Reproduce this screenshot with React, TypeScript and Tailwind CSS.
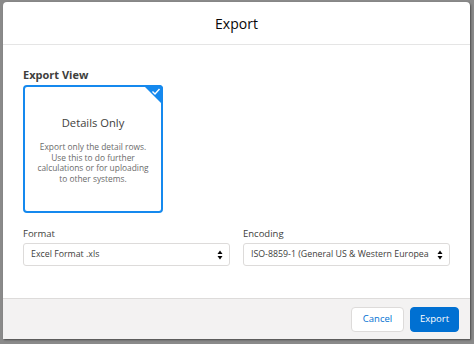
import React from "react";

const font = { fontFamily: "'Open Sans', 'Noto Sans', sans-serif" };

function SelectArrows() {
    return (
        <svg width="6" height="10" viewBox="0 0 6 10" className="shrink-0">
            <path d="M3 0.5 L5.5 4 L0.5 4 Z" fill="#080707" />
            <path d="M3 9.5 L5.5 6 L0.5 6 Z" fill="#080707" />
        </svg>
    );
}

function Field({ label, value }: { label: string; value: string }) {
    return (
        <div className="flex flex-col min-w-0">
            <span className="text-[9.5px] leading-[12px] text-[#3e3e3c] mb-[3px]">
                {label}
            </span>
            <div className="h-[23px] flex items-center gap-2 pl-[7px] pr-[6px] bg-white border border-[#dddbda] rounded-[3px]">
                <span className="flex-1 min-w-0 whitespace-nowrap overflow-hidden text-[8.8px] text-[#3e3e3c]">
                    {value}
                </span>
                <SelectArrows />
            </div>
        </div>
    );
}

export default function App() {
    return (
        <div
            className="w-[474px] h-[344px] bg-[#8a8a8a] pt-[2px] pl-[3px]"
            style={font}
        >
            <div className="w-[467px] h-[337px] bg-white rounded-t-[4px] flex flex-col overflow-hidden shadow-[1px_1px_2px_rgba(0,0,0,0.45)]">
                {/* header */}
                <div className="h-[43px] shrink-0 flex items-center justify-center border-b border-[#e5e5e5]">
                    <h2 className="text-[14px] text-[#080707]">Export</h2>
                </div>

                {/* body */}
                <div className="flex-1 px-5 pt-[23px]">
                    <div className="text-[11px] leading-[14px] font-bold text-[#3e3e3c] mb-[3px]">
                        Export View
                    </div>
                    <div className="relative w-[140px] h-[128px] border-2 border-[#1589ee] rounded-[4px] flex flex-col items-center pt-[28px]">
                        <svg
                            width="20"
                            height="20"
                            viewBox="0 0 20 20"
                            className="absolute -top-[2px] -right-[2px]"
                        >
                            <path d="M0 0 H16 A4 4 0 0 1 20 4 V20 Z" fill="#1589ee" />
                            <path
                                d="M9.5 6.5 L12 9 L16.5 4"
                                fill="none"
                                stroke="white"
                                strokeWidth="1.4"
                            />
                        </svg>
                        <div className="text-[11.2px] leading-[15px] text-[#3e3e3c]">
                            Details Only
                        </div>
                        <p className="mt-[12px] text-center whitespace-nowrap text-[8.4px] leading-[10.7px] text-[#6b6b6b]">
                            Export only the detail rows.
                            <br />
                            Use this to do further
                            <br />
                            calculations or for uploading
                            <br />
                            to other systems.
                        </p>
                    </div>

                    <div className="grid grid-cols-2 gap-[13px] mt-[15px]">
                        <Field label="Format" value="Excel Format .xls" />
                        <Field
                            label="Encoding"
                            value="ISO-8859-1 (General US & Western European, ISO-LATIN-1)"
                        />
                    </div>
                </div>

                {/* footer */}
                <div className="h-[41px] shrink-0 bg-[#f3f2f2] border-t border-[#dddbda] flex items-center justify-end gap-[6px] pr-[11px]">
                    <button className="w-[53px] h-[25px] bg-white border border-[#dddbda] rounded-[4px] text-[9.5px] text-[#0070d2]">
                        Cancel
                    </button>
                    <button className="w-[49px] h-[25px] bg-[#0070d2] border border-[#0070d2] rounded-[4px] text-[9.5px] text-white">
                        Export
                    </button>
                </div>
            </div>
        </div>
    );
}
